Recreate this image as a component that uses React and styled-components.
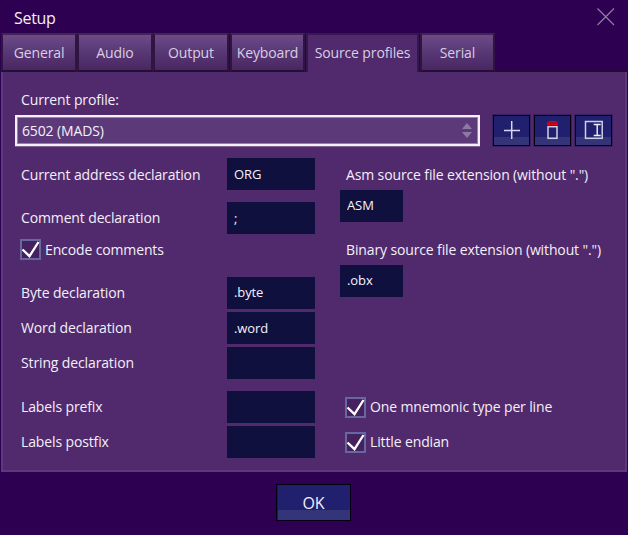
import React from "react";
import styled, { createGlobalStyle } from "styled-components";

const Global = createGlobalStyle`
  * { box-sizing: border-box; }
  body { margin: 0; background: #2d0051; }
`;

const Dialog = styled.main`
  width: 628px;
  height: 535px;
  background: #2d0051;
  color: #f4eff8;
  font: 14px/20px "Open Sans", "Noto Sans", sans-serif;
  letter-spacing: -0.13px;
  display: flex;
  flex-direction: column;
  overflow: hidden;
  white-space: nowrap;
`;

const TitleBar = styled.header`
  height: 33px;
  flex: none;
  display: flex;
  justify-content: space-between;
  padding: 8px 13px 0 14px;
`;

const Title = styled.h1`
  margin: 0;
  font-size: 16px;
  font-weight: 400;
  line-height: 21px;
  letter-spacing: -0.3px;
`;

const CloseButton = styled.button`
  width: 18px;
  height: 18px;
  padding: 0;
  border: 0;
  background: none;
  svg { display: block; }
`;

const Tabs = styled.nav`
  height: 39px;
  flex: none;
  display: flex;
  padding-left: 1px;
  background: linear-gradient(transparent 37px, #210b3b 37px);
`;

const Tab = styled.button`
  width: ${(p) => p.$width}px;
  height: 39px;
  margin-right: ${(p) => p.$gap || 0}px;
  padding: ${(p) => (p.$active ? "0 0 1px" : "1px 0 0")};
  font: inherit;
  letter-spacing: inherit;
  color: #d9cee2;
  border: 2px solid;
  border-color: ${(p) => (p.$active ? "#38194f #351650 transparent #351650" : "#402555 #311541 #240d39 #311541")};
  border-bottom-width: ${(p) => (p.$active ? 0 : 2)}px;
  background: ${(p) => (p.$active ? "#502a6d" : "linear-gradient(#6c4b87, #583775 50%, #492761)")};
`;

const Panel = styled.section`
  width: 626px;
  height: 400px;
  flex: none;
  margin-left: 1px;
  padding: 18px 12px 0;
  background: #502a6d;
  border: solid #5c397a;
  border-width: 0 2px 2px;
`;

const ProfileLabel = styled.div`
  height: 25px;
  padding-left: 6px;
`;

const ProfileRow = styled.div`
  display: flex;
  height: 32px;
`;

const Select = styled.div`
  width: 465px;
  height: 31px;
  margin-right: 13px;
  padding: 0 6px 0 5px;
  display: flex;
  align-items: center;
  justify-content: space-between;
  background: #5c3978;
  border: 2px solid #f5effb;
  box-shadow: inset 0 0 0 1px #9a80b0, 0 1px 0 #806394;
`;

const IconButton = styled.button`
  width: 37px;
  height: 31px;
  margin-right: ${(p) => p.$gap || 0}px;
  padding: 0;
  border: 1px solid #050012;
  box-shadow: 0 0 0 1px #3d1e61;
  background: linear-gradient(#20206e 21px, #343479 21px);
  svg { display: block; }
`;

const Columns = styled.div`
  display: flex;
  padding: 11px 0 0 6px;
`;

const LeftColumn = styled.div`
  width: 319px;
`;

const RightColumn = styled.div`
  padding-top: 7px;
`;

const FieldRow = styled.label`
  display: grid;
  grid-template-columns: 206px 88px;
  align-items: center;
  height: 32px;
  margin-bottom: ${(p) => p.$gap || 0}px;
`;

const Input = styled.input`
  width: ${(p) => p.$width || 88}px;
  height: 32px;
  padding: 0 0 ${(p) => (p.$raised ? 2 : 0)}px 7px;
  border: 0;
  border-radius: 0;
  outline: 0;
  background: #10103f;
  color: #f5f2fa;
  font: 13px/20px "Open Sans", "Noto Sans", sans-serif;
  letter-spacing: -0.1px;
`;

const LabelText = styled.span`
  padding-top: ${(p) => (p.$low ? 2 : 0)}px;
`;

const Extension = styled.label`
  display: block;
  height: 75px;
`;

const ExtensionLabel = styled.span`
  display: block;
  height: 25px;
  padding-left: 6px;
`;

const Check = styled.label`
  display: flex;
  align-items: center;
  gap: 4px;
  height: 20px;
  margin: ${(p) => p.$margin || "0"};
  svg { flex: none; }
`;

const Footer = styled.footer`
  display: flex;
  justify-content: center;
  padding: 12px 1px 0 0;
`;

const OkButton = styled.button`
  width: 75px;
  height: 37px;
  padding: 0;
  border: 1px solid #050012;
  box-shadow: inset 1px 0 #18184f;
  background: linear-gradient(#20206e 25px, #343479 25px);
  color: #f2eff7;
  font: 16px/20px "Open Sans", "Noto Sans", sans-serif;
`;

function Field({ label, value, gap, low, raised }) {
  return (
    <FieldRow $gap={gap}>
      <LabelText $low={low}>{label}</LabelText>
      <Input defaultValue={value} $raised={raised} />
    </FieldRow>
  );
}

function CheckBox({ label, margin, low }) {
  return (
    <Check $margin={margin}>
      <svg width="21" height="21" viewBox="0 0 21 21">
        <rect x="1" y="1" width="19" height="19" fill="#45225f" stroke="#6868a0" strokeWidth="2" />
        <path d="M2.5 10.5 L9.5 17.2 L18.5 3" fill="none" stroke="#fff" strokeWidth="2.3" />
      </svg>
      <LabelText $low={low}>{label}</LabelText>
    </Check>
  );
}

const tabs = [
  { label: "General", width: 76 },
  { label: "Audio", width: 76 },
  { label: "Output", width: 76, gap: 1 },
  { label: "Keyboard", width: 75, gap: 1 },
  { label: "Source profiles", width: 113, gap: 1, active: true },
  { label: "Serial", width: 75 },
];

export default function App() {
  return (
    <Dialog>
      <Global />
      <TitleBar>
        <Title>Setup</Title>
        <CloseButton aria-label="Close">
          <svg width="18" height="18" viewBox="0 0 18 18">
            <path d="M0.5 0.5 L17 17 M17 0.5 L0.5 17" stroke="#9680a8" strokeWidth="1.1" />
          </svg>
        </CloseButton>
      </TitleBar>
      <Tabs>
        {tabs.map((t) => (
          <Tab key={t.label} $width={t.width} $gap={t.gap} $active={t.active}>{t.label}</Tab>
        ))}
      </Tabs>
      <Panel>
        <ProfileLabel>Current profile:</ProfileLabel>
        <ProfileRow>
          <Select>
            6502 (MADS)
            <svg width="10" height="16" viewBox="0 0 10 16">
              <path d="M0 6 L5 0 L10 6 Z M0 9 L5 15 L10 9 Z" fill="#9078a4" />
            </svg>
          </Select>
          <IconButton aria-label="Add profile" $gap={4}>
            <svg width="35" height="29" viewBox="0 0 35 29">
              <path d="M10 14.5 H26 M17.7 5 V23" stroke="#d8d6e8" strokeWidth="1.5" />
            </svg>
          </IconButton>
          <IconButton aria-label="Delete profile" $gap={4}>
            <svg width="35" height="29" viewBox="0 0 35 29">
              <path d="M12.5 8.5 V7 L14 5.5 H21 L22.5 7 V8.5 Z" fill="#a80924" stroke="#e80013" />
              <rect x="13" y="10.7" width="9" height="11.6" fill="none" stroke="#d0cee2" strokeWidth="1.5" />
            </svg>
          </IconButton>
          <IconButton aria-label="Rename profile">
            <svg width="35" height="29" viewBox="0 0 35 29">
              <rect x="9.5" y="5.5" width="16.7" height="16.8" fill="none" stroke="#d0cee2" strokeWidth="1.5" />
              <path d="M17.7 8.5 H24.7 M17.7 19.5 H24.7 M21.2 8.5 V19.5" stroke="#f0eef8" strokeWidth="1.4" />
            </svg>
          </IconButton>
        </ProfileRow>
        <Columns>
          <LeftColumn>
            <Field label="Current address declaration" value="ORG" gap={12} low />
            <Field label="Comment declaration" value=";" gap={5} />
            <CheckBox label="Encode comments" margin="0 0 18px -1px" low />
            <Field label="Byte declaration" value=".byte" gap={3} raised />
            <Field label="Word declaration" value=".word" gap={3} />
            <Field label="String declaration" value="" gap={12} />
            <Field label="Labels prefix" value="" gap={3} />
            <Field label="Labels postfix" value="" />
          </LeftColumn>
          <RightColumn>
            <Extension>
              <ExtensionLabel>Asm source file extension (without ".")</ExtensionLabel>
              <Input $width={63} $raised defaultValue="ASM" />
            </Extension>
            <Extension>
              <ExtensionLabel>Binary source file extension (without ".")</ExtensionLabel>
              <Input $width={63} $raised defaultValue=".obx" />
            </Extension>
            <CheckBox label="One mnemonic type per line" margin="82px 0 15px 5px" />
            <CheckBox label="Little endian" margin="0 0 0 5px" />
          </RightColumn>
        </Columns>
      </Panel>
      <Footer>
        <OkButton>OK</OkButton>
      </Footer>
    </Dialog>
  );
}
